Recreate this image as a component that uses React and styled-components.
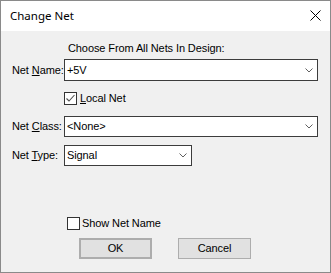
import React from "react";
import styled, { createGlobalStyle } from "styled-components";

const Global = createGlobalStyle`
  html, body { margin: 0; padding: 0; background: #fff; }
  * { box-sizing: border-box; }
`;

const Window = styled.div`
  width: 331px;
  height: 273px;
  border: 1px solid #8a8a8a;
  display: flex;
  flex-direction: column;
  background: #f0f0f0;
  font-family: "Liberation Sans", Arial, sans-serif;
  font-size: 11px;
  letter-spacing: -0.1px;
  color: #000;
`;

const TitleBar = styled.div`
  height: 30px;
  flex: none;
  background: #fff;
  display: flex;
  align-items: center;
  justify-content: space-between;
  padding: 0 9px 1px 9px;
`;

const Title = styled.span`
  font-family: "Noto Sans", "Open Sans", sans-serif;
  font-size: 11.5px;
  letter-spacing: 0;
  color: #000;
`;

const Body = styled.div`
  flex: 1;
  display: flex;
  flex-direction: column;
  padding: 11px 11px 0 11px;
`;

const Heading = styled.div`
  height: 13px;
  line-height: 13px;
  margin-left: 56px;
  white-space: nowrap;
`;

const FormRow = styled.div`
  display: grid;
  grid-template-columns: 52px ${(p) => p.$fieldWidth || 254}px;
  align-items: center;
  margin-top: ${(p) => p.$top}px;
`;

const Label = styled.label`
  line-height: 13px;
  white-space: nowrap;
`;

const Mn = styled.span`
  text-decoration: underline;
  text-underline-offset: 1px;
`;

const Combo = styled.div`
  height: ${(p) => p.$h || 21}px;
  background: #fff;
  border: 1px solid #3c3c3c;
  display: flex;
  align-items: center;
  justify-content: space-between;
  padding: 0 4px 0 2px;
  line-height: 13px;
`;

const CheckRow = styled.label`
  display: flex;
  align-items: center;
  gap: ${(p) => p.$gap || 3}px;
  height: 13px;
  line-height: 13px;
  margin-top: ${(p) => p.$top}px;
  margin-left: ${(p) => p.$left}px;
`;

const Box = styled.span`
  width: 13px;
  height: 13px;
  flex: none;
  background: #fff;
  border: 1px solid #333;
  display: flex;
  align-items: center;
  justify-content: center;
`;

const ButtonRow = styled.div`
  display: flex;
  gap: 26px;
  margin-top: 8px;
  margin-left: 67px;
`;

const Button = styled.button`
  width: 73px;
  height: 21px;
  padding: 0;
  background: #e1e1e1;
  border: ${(p) => (p.$default ? "2px solid #adadad" : "1px solid #adadad")};
  font-family: "Liberation Sans", Arial, sans-serif;
  font-size: 11px;
  letter-spacing: -0.1px;
  color: #000;
  line-height: 13px;
`;

const Chevron = () => (
  <svg width="8" height="5" viewBox="0 0 8 5" style={{ flex: "none" }}>
    <polyline points="0.5,0.5 4,4 7.5,0.5" fill="none" stroke="#606060" strokeWidth="1" />
  </svg>
);

const CloseIcon = () => (
  <svg width="11" height="11" viewBox="0 0 11 11">
    <path d="M0.5 0.5 L10.5 10.5 M10.5 0.5 L0.5 10.5" stroke="#000" strokeWidth="1" />
  </svg>
);

const CheckMark = () => (
  <svg width="11" height="11" viewBox="0 0 11 11">
    <polyline points="1.5,5.5 4,8 9.5,2" fill="none" stroke="#505050" strokeWidth="1.1" />
  </svg>
);

export default function App() {
  return (
    <>
      <Global />
      <Window>
        <TitleBar>
          <Title>Change Net</Title>
          <CloseIcon />
        </TitleBar>
        <Body>
          <Heading>Choose From All Nets In Design:</Heading>
          <FormRow $top={4}>
            <Label>
              Net <Mn>N</Mn>ame:
            </Label>
            <Combo $h={22}>
              <span>+5V</span>
              <Chevron />
            </Combo>
          </FormRow>
          <CheckRow $top={11} $left={52}>
            <Box>
              <CheckMark />
            </Box>
            <span>
              <Mn>L</Mn>ocal Net
            </span>
          </CheckRow>
          <FormRow $top={11}>
            <Label>
              Net <Mn>C</Mn>lass:
            </Label>
            <Combo>
              <span>&lt;None&gt;</span>
              <Chevron />
            </Combo>
          </FormRow>
          <FormRow $top={8} $fieldWidth={128}>
            <Label>
              Net <Mn>T</Mn>ype:
            </Label>
            <Combo>
              <span>Signal</span>
              <Chevron />
            </Combo>
          </FormRow>
          <CheckRow $top={51} $left={55} $gap={2}>
            <Box />
            <span>Show Net Name</span>
          </CheckRow>
          <ButtonRow>
            <Button $default>OK</Button>
            <Button>Cancel</Button>
          </ButtonRow>
        </Body>
      </Window>
    </>
  );
}
